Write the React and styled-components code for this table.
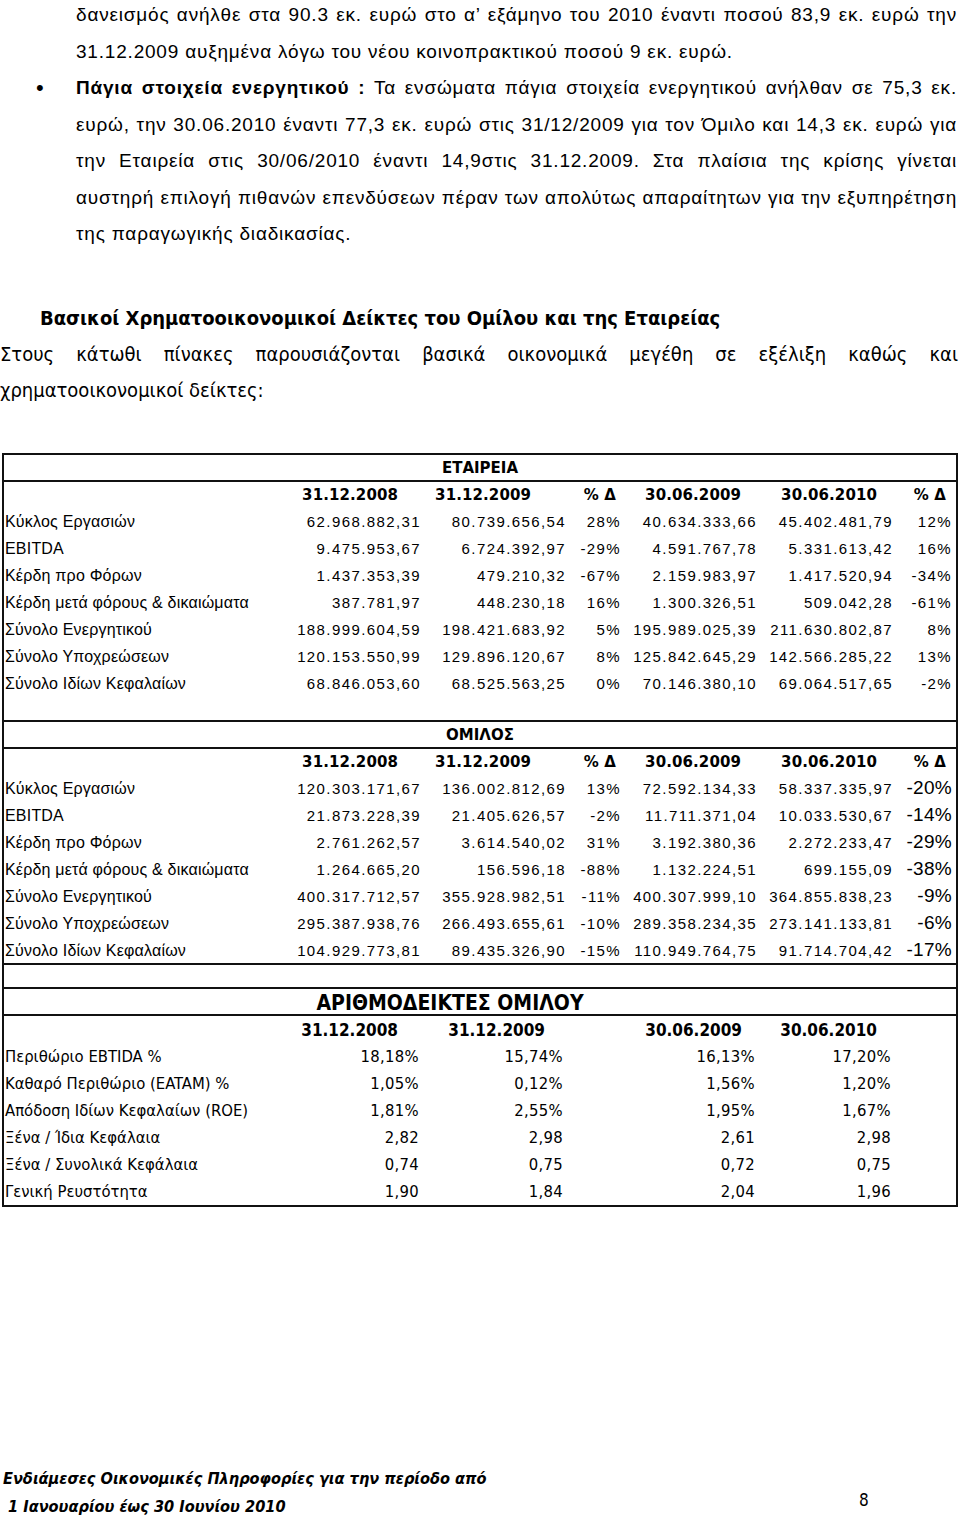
import React from "react";
import styled, { createGlobalStyle } from "styled-components";

const SANS = `"Liberation Sans", Arial, sans-serif`;
const NARROW = `"Liberation Sans Narrow", "DejaVu Sans Condensed", "Liberation Sans", sans-serif`;
const WIDE = `"DejaVu Sans", Verdana, sans-serif`;

const GlobalStyle = createGlobalStyle`
  html, body {
    margin: 0;
    padding: 0;
    background: #fff;
  }
  body {
    color: #000;
    font-family: ${SANS};
  }
`;

const Page = styled.div`
  width: 960px;
  min-height: 1521px;
  overflow: hidden;
`;

const Item = styled.div`
  display: grid;
  grid-template-columns: 76px 881px;
  font-family: ${SANS};
  font-size: 19px;
  letter-spacing: 0.8px;
  line-height: 36.5px;
  margin-top: ${(p) => p.$top || 0}px;
`;

const Bullet = styled.div`
  padding-left: 36px;
  font-size: 22px;
`;

const Lines = styled.div``;

const Line = styled.div`
  text-align: ${(p) => (p.$just ? "justify" : "left")};
  text-align-last: ${(p) => (p.$just ? "justify" : "left")};
`;

const Strong = styled.b`
  font-weight: 700;
`;

const Heading = styled.h2`
  margin: 47px 0 0;
  padding-left: 40px;
  font-family: ${NARROW};
  font-weight: 700;
  font-size: 20px;
  line-height: 36px;
`;

const Intro = styled.div`
  width: 958px;
  font-family: ${NARROW};
  font-size: 20px;
  line-height: 36px;
`;

const Sheet = styled.div`
  margin: 45px 0 0 2px;
  width: 956px;
  border: 2px solid #111;
  box-sizing: border-box;
  display: flex;
  flex-direction: column;
`;

const Row = styled.div`
  display: grid;
  grid-template-columns: 276px 145px 145px 55px 136px 136px 59px;
  align-items: baseline;
  box-sizing: border-box;
  padding-top: 4px;
  height: ${(p) => p.$h || 27}px;
  border-bottom: ${(p) => (p.$rule ? "2px solid #111" : "none")};
`;

const Title = styled.div`
  grid-column: 1 / -1;
  text-align: center;
  padding-right: ${(p) => p.$pr || 0}px;
  font-family: ${(p) => (p.$narrow ? NARROW : WIDE)};
  font-weight: 700;
  font-size: ${(p) => (p.$narrow ? 21 : 15)}px;
  line-height: ${(p) => (p.$narrow ? 20 : 18)}px;
`;

const Label = styled.div`
  padding-left: 1px;
  white-space: nowrap;
  font-family: ${(p) => (p.$narrow ? NARROW : SANS)};
  font-size: ${(p) => (p.$narrow ? 16.5 : 16)}px;
  letter-spacing: ${(p) => (p.$narrow ? 0 : 0.2)}px;
`;

const DateHead = styled.div`
  text-align: right;
  padding-right: ${(p) => p.$pr}px;
  white-space: nowrap;
  font-family: ${(p) => (p.$narrow ? NARROW : WIDE)};
  font-weight: 700;
  font-size: ${(p) => (p.$narrow ? 17 : 15)}px;
  letter-spacing: ${(p) => (p.$narrow ? 0 : 0.1)}px;
`;

const Num = styled.div`
  text-align: right;
  padding-right: ${(p) => (p.$pr != null ? p.$pr : 4)}px;
  white-space: nowrap;
  font-family: ${(p) => (p.$narrow ? NARROW : SANS)};
  font-size: ${(p) => (p.$big ? 19 : p.$narrow ? 16.5 : 15)}px;
  line-height: ${(p) => (p.$big ? "16px" : "normal")};
  letter-spacing: ${(p) => (p.$big || p.$narrow ? 0.3 : 1.4)}px;
`;

const Gap = styled.div``;

const Footer = styled.div`
  display: flex;
  align-items: flex-end;
  margin-top: 258px;
  font-family: ${NARROW};
`;

const FootText = styled.div`
  width: 856px;
  padding-left: 3px;
  font-style: italic;
  font-weight: 700;
  font-size: 16.2px;
  line-height: 28px;
`;

const PageNo = styled.div`
  font-size: 17px;
  line-height: 28px;
  padding-bottom: 7px;
`;

const headPads = [27, 39, 9, 20, 20, 10];
const dates = ["31.12.2008", "31.12.2009", "% Δ", "30.06.2009", "30.06.2010", "% Δ"];

const company = [
  ["Κύκλος Εργασιών", "62.968.882,31", "80.739.656,54", "28%", "40.634.333,66", "45.402.481,79", "12%"],
  ["EBITDA", "9.475.953,67", "6.724.392,97", "-29%", "4.591.767,78", "5.331.613,42", "16%"],
  ["Κέρδη προ Φόρων", "1.437.353,39", "479.210,32", "-67%", "2.159.983,97", "1.417.520,94", "-34%"],
  ["Κέρδη μετά φόρους & δικαιώματα", "387.781,97", "448.230,18", "16%", "1.300.326,51", "509.042,28", "-61%"],
  ["Σύνολο Ενεργητικού", "188.999.604,59", "198.421.683,92", "5%", "195.989.025,39", "211.630.802,87", "8%"],
  ["Σύνολο Υποχρεώσεων", "120.153.550,99", "129.896.120,67", "8%", "125.842.645,29", "142.566.285,22", "13%"],
  ["Σύνολο Ιδίων Κεφαλαίων", "68.846.053,60", "68.525.563,25", "0%", "70.146.380,10", "69.064.517,65", "-2%"],
];

const group = [
  ["Κύκλος Εργασιών", "120.303.171,67", "136.002.812,69", "13%", "72.592.134,33", "58.337.335,97", "-20%"],
  ["EBITDA", "21.873.228,39", "21.405.626,57", "-2%", "11.711.371,04", "10.033.530,67", "-14%"],
  ["Κέρδη προ Φόρων", "2.761.262,57", "3.614.540,02", "31%", "3.192.380,36", "2.272.233,47", "-29%"],
  ["Κέρδη μετά φόρους & δικαιώματα", "1.264.665,20", "156.596,18", "-88%", "1.132.224,51", "699.155,09", "-38%"],
  ["Σύνολο Ενεργητικού", "400.317.712,57", "355.928.982,51", "-11%", "400.307.999,10", "364.855.838,23", "-9%"],
  ["Σύνολο Υποχρεώσεων", "295.387.938,76", "266.493.655,61", "-10%", "289.358.234,35", "273.141.133,81", "-6%"],
  ["Σύνολο Ιδίων Κεφαλαίων", "104.929.773,81", "89.435.326,90", "-15%", "110.949.764,75", "91.714.704,42", "-17%"],
];

// ratio table uses columns 1, 2, 4, 5 of the grid
const ratios = [
  ["Περιθώριο EBTIDA %", "18,18%", "15,74%", "16,13%", "17,20%"],
  ["Καθαρό Περιθώριο (EATAM) %", "1,05%", "0,12%", "1,56%", "1,20%"],
  ["Απόδοση Ιδίων Κεφαλαίων (ROE)", "1,81%", "2,55%", "1,95%", "1,67%"],
  ["Ξένα / Ίδια Κεφάλαια", "2,82", "2,98", "2,61", "2,98"],
  ["Ξένα / Συνολικά Κεφάλαια", "0,74", "0,75", "0,72", "0,75"],
  ["Γενική Ρευστότητα", "1,90", "1,84", "2,04", "1,96"],
];

function DatesRow() {
  return (
    <Row>
      <Gap />
      {dates.map((d, i) => (
        <DateHead key={i} $pr={headPads[i]}>{d}</DateHead>
      ))}
    </Row>
  );
}

function Block({ title, rows, big, tail }) {
  return (
    <>
      <Row $rule>
        <Title>{title}</Title>
      </Row>
      <DatesRow />
      {rows.map((r, i) => (
        <Row key={r[0]} $rule={tail && i === rows.length - 1}>
          <Label>{r[0]}</Label>
          {r.slice(1).map((v, j) => (
            <Num key={j} $big={big && j === 5}>{v}</Num>
          ))}
        </Row>
      ))}
    </>
  );
}

function Ratios() {
  const pads = [27, 25, 19, 20];
  return (
    <>
      <Row $rule>
        <Title $narrow $pr={60}>ΑΡΙΘΜΟΔΕΙΚΤΕΣ ΟΜΙΛΟΥ</Title>
      </Row>
      <Row>
        <Gap />
        <DateHead $narrow $pr={pads[0]}>31.12.2008</DateHead>
        <DateHead $narrow $pr={pads[1]}>31.12.2009</DateHead>
        <Gap />
        <DateHead $narrow $pr={pads[2]}>30.06.2009</DateHead>
        <DateHead $narrow $pr={pads[3]}>30.06.2010</DateHead>
        <Gap />
      </Row>
      {ratios.map((r) => (
        <Row key={r[0]}>
          <Label $narrow>{r[0]}</Label>
          <Num $narrow $pr={6}>{r[1]}</Num>
          <Num $narrow $pr={7}>{r[2]}</Num>
          <Gap />
          <Num $narrow $pr={6}>{r[3]}</Num>
          <Num $narrow $pr={6}>{r[4]}</Num>
          <Gap />
        </Row>
      ))}
    </>
  );
}

export default function App() {
  return (
    <Page>
      <GlobalStyle />
      <Item $top={-3}>
        <Gap />
        <Lines>
          <Line $just>
            δανεισμός ανήλθε στα 90.3 εκ. ευρώ στο α’ εξάμηνο του 2010 έναντι ποσού 83,9 εκ. ευρώ την
          </Line>
          <Line>31.12.2009 αυξημένα λόγω του νέου κοινοπρακτικού ποσού 9 εκ. ευρώ.</Line>
        </Lines>
      </Item>
      <Item>
        <Bullet>•</Bullet>
        <Lines>
          <Line $just>
            <Strong>Πάγια στοιχεία ενεργητικού :</Strong> Τα ενσώματα πάγια στοιχεία ενεργητικού ανήλθαν σε 75,3 εκ.
          </Line>
          <Line $just>
            ευρώ, την 30.06.2010 έναντι 77,3 εκ. ευρώ στις 31/12/2009 για τον Όμιλο και 14,3 εκ. ευρώ για
          </Line>
          <Line $just>
            την Εταιρεία στις 30/06/2010 έναντι 14,9στις 31.12.2009. Στα πλαίσια της κρίσης γίνεται
          </Line>
          <Line $just>
            αυστηρή επιλογή πιθανών επενδύσεων πέραν των απολύτως απαραίτητων για την εξυπηρέτηση
          </Line>
          <Line>της παραγωγικής διαδικασίας.</Line>
        </Lines>
      </Item>

      <Heading>Βασικοί Χρηματοοικονομικοί Δείκτες του Ομίλου και της Εταιρείας</Heading>
      <Intro>
        <Line $just>
          Στους κάτωθι πίνακες παρουσιάζονται βασικά οικονομικά μεγέθη σε εξέλιξη καθώς και
        </Line>
        <Line>χρηματοοικονομικοί δείκτες:</Line>
      </Intro>

      <Sheet>
        <Block title="ΕΤΑΙΡΕΙΑ" rows={company} />
        <Row $rule $h={24} />
        <Block title="ΟΜΙΛΟΣ" rows={group} big tail />
        <Row $rule $h={24} />
        <Ratios />
      </Sheet>

      <Footer>
        <FootText>
          Ενδιάμεσες Οικονομικές Πληροφορίες για την περίοδο από
          <br />
          &nbsp;1 Ιανουαρίου έως 30 Ιουνίου 2010
        </FootText>
        <PageNo>8</PageNo>
      </Footer>
    </Page>
  );
}
